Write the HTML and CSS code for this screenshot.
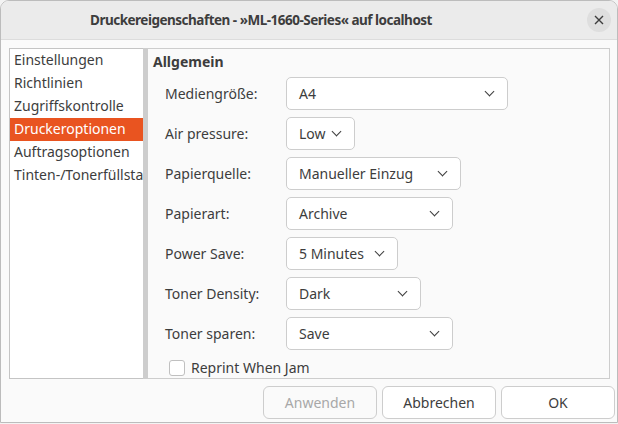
FILE: index.html
```html
<!DOCTYPE html>
<html lang="de">

<head>
    <meta charset="UTF-8">
    <title>Druckereigenschaften</title>
    <link rel="stylesheet" href="styles.css">
</head>

<body>
    <div class="window">
        <div class="titlebar">
            <span class="title">Druckereigenschaften - »ML-1660-Series« auf localhost</span>
            <button class="close" aria-label="Schließen">
                <svg width="10" height="10" viewBox="0 0 10 10">
                    <path d="M1 1 L9 9 M9 1 L1 9" stroke="#3d3d3d" stroke-width="1.4" fill="none" />
                </svg>
            </button>
        </div>

        <div class="content">
            <div class="panes">
                <ul class="sidebar">
                    <li>Einstellungen</li>
                    <li>Richtlinien</li>
                    <li>Zugriffskontrolle</li>
                    <li class="selected">Druckeroptionen</li>
                    <li>Auftragsoptionen</li>
                    <li>Tinten-/Tonerfüllstand</li>
                </ul>
                <div class="handle"></div>
                <div class="panel">
                    <h2>Allgemein</h2>
                    <div class="options">
                        <label>Mediengröße:</label>
                        <div class="combo w-222">A4 <span class="chev"></span></div>

                        <label>Air pressure:</label>
                        <div class="combo w-69">Low <span class="chev"></span></div>

                        <label>Papierquelle:</label>
                        <div class="combo w-175">Manueller Einzug <span class="chev"></span></div>

                        <label>Papierart:</label>
                        <div class="combo w-167">Archive <span class="chev"></span></div>

                        <label>Power Save:</label>
                        <div class="combo w-112">5 Minutes <span class="chev"></span></div>

                        <label>Toner Density:</label>
                        <div class="combo w-135">Dark <span class="chev"></span></div>

                        <label>Toner sparen:</label>
                        <div class="combo w-167">Save <span class="chev"></span></div>
                    </div>
                    <div class="check-row">
                        <span class="checkbox"></span>
                        <span>Reprint When Jam</span>
                    </div>
                </div>
            </div>

            <div class="buttons">
                <button class="btn" disabled>Anwenden</button>
                <button class="btn">Abbrechen</button>
                <button class="btn">OK</button>
            </div>
        </div>
    </div>
</body>

</html>
```

FILE: styles.css
```css
body {
    margin: 0;
    background: #f3f3f3;
    font-family: 'Noto Sans', 'DejaVu Sans', sans-serif;
    font-size: 14px;
    color: #3d3d3d;
}

.window {
    width: 616px;
    height: 421px;
    border: 1px solid #bcbcbc;
    border-radius: 9px 9px 0 0;
    background: #fafafa;
    overflow: hidden;
    display: flex;
    flex-direction: column;
}

/* Title bar */
.titlebar {
    height: 38px;
    flex: none;
    background: #ebebeb;
    border-bottom: 1px solid #dcdcdc;
    display: flex;
    align-items: center;
    justify-content: center;
    position: relative;
}

.title {
    font-weight: bold;
    font-size: 13.5px;
    letter-spacing: -0.5px;
    color: #3d3d3d;
    margin-right: 96px;
}

.close {
    position: absolute;
    right: 6px;
    top: 7px;
    width: 24px;
    height: 24px;
    border: none;
    border-radius: 50%;
    background: #dedede;
    display: flex;
    align-items: center;
    justify-content: center;
    padding: 0;
}

/* Main area */
.content {
    flex: 1;
    display: flex;
    flex-direction: column;
    padding: 8px 7px 4px 8px;
}

.panes {
    height: 331px;
    display: flex;
}

.sidebar {
    list-style: none;
    margin: 0;
    padding: 0;
    width: 133px;
    background: #fff;
    border: 1px solid #c4c4c4;
    border-right: none;
    overflow: hidden;
    white-space: nowrap;
}

.sidebar li {
    height: 23px;
    line-height: 22px;
    padding-left: 4px;
}

.sidebar li.selected {
    background: #e95420;
    color: #fff;
}

.handle {
    width: 4px;
    background: #cdcdcd;
}

.panel {
    flex: 1;
    border: 1px solid #cdcdcd;
    padding: 3px 5px;
}

.panel h2 {
    margin: 0;
    font-size: 14px;
    font-weight: bold;
    line-height: 20px;
}

.options {
    display: grid;
    grid-template-columns: 121px auto;
    row-gap: 7px;
    justify-items: start;
    align-items: center;
    padding: 5px 0 0 12px;
}

.combo {
    height: 33px;
    border: 1px solid #cdcdcd;
    border-radius: 5px;
    background: #fff;
    display: flex;
    align-items: center;
    justify-content: space-between;
    padding: 0 12px;
    box-sizing: border-box;
}

.chev {
    width: 6px;
    height: 6px;
    border-right: 1.3px solid #3d3d3d;
    border-bottom: 1.3px solid #3d3d3d;
    transform: rotate(45deg);
    margin: -4px 2px 0 0;
}

.w-222 { width: 222px; }
.w-69 { width: 69px; }
.w-175 { width: 175px; }
.w-167 { width: 167px; }
.w-112 { width: 112px; }
.w-135 { width: 135px; }

.check-row {
    display: flex;
    align-items: center;
    gap: 6px;
    padding: 8px 0 0 16px;
}

.checkbox {
    width: 14px;
    height: 14px;
    border: 1px solid #c0c0c0;
    border-radius: 3px;
    background: #fff;
}

/* Dialog buttons */
.buttons {
    display: flex;
    justify-content: flex-end;
    gap: 5px;
    padding-top: 7px;
    margin-right: -5px;
}

.btn {
    width: 114px;
    height: 33px;
    border: 1px solid #cdcdcd;
    border-radius: 6px;
    background: #fff;
    font-family: inherit;
    font-size: 14px;
    color: #3d3d3d;
}

.btn:disabled {
    color: #a8a8a8;
    background: #fafafa;
}
```
